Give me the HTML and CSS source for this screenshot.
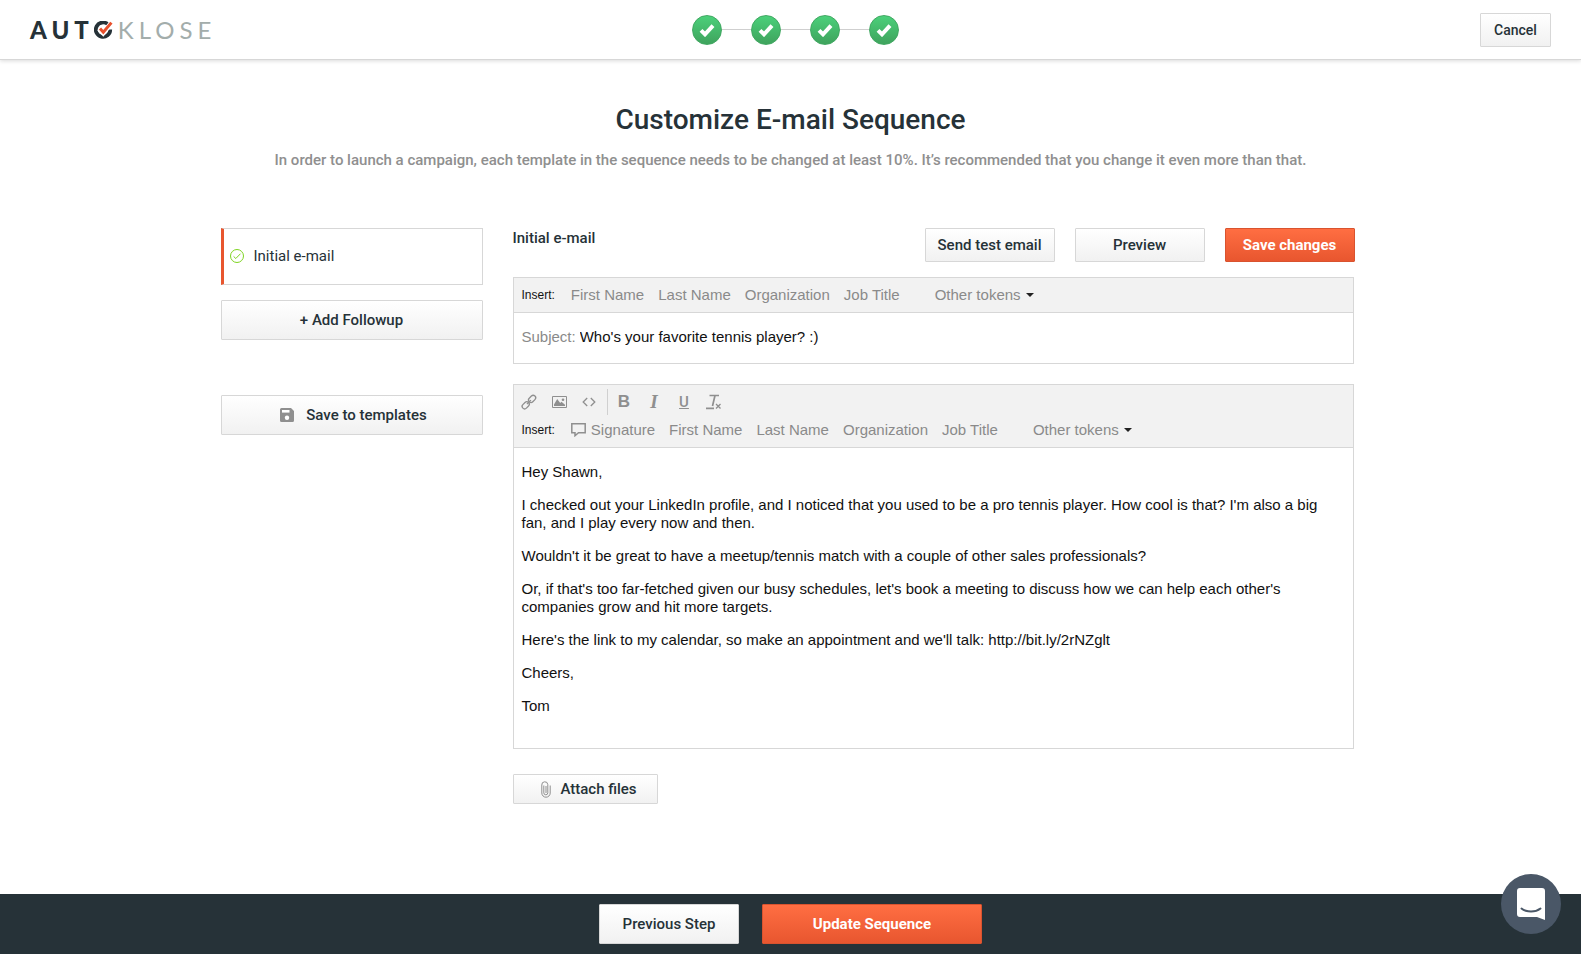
FILE: index.html
```
<!DOCTYPE html>
<html lang="en">
<head>
    <meta charset="UTF-8">
    <meta name="viewport" content="width=device-width, initial-scale=1.0">
    <title>Customize E-mail Sequence</title>
    <link rel="stylesheet" href="styles.css">
</head>
<body>
    <header class="header">
        <a href="#" class="logo" aria-label="Autoklose">
            <span class="logo-dark">AUT</span>
            <svg class="logo-mark" width="19" height="18" viewBox="0 0 19 18">
                <path d="M14 3.500A7.200 7.200 0 1 0 16.200 8.500" fill="none" stroke="#263238" stroke-width="3.800"/>
                <path d="M5.200 7.800l4 4.200 8-10" fill="none" stroke="#fff" stroke-width="5"/>
                <path d="M6 7.600l3.300 3.600L17.400 1.600" fill="none" stroke="#e8502d" stroke-width="3"/>
            </svg>
            <span class="logo-light">KLOSE</span>
        </a>
        <ol class="steps">
            <li><svg width="16" height="14" viewBox="0 0 16 14"><path d="M2 7.400l4 3.900L14 2.700" fill="none" stroke="#fff" stroke-width="4"/></svg></li>
            <li><svg width="16" height="14" viewBox="0 0 16 14"><path d="M2 7.400l4 3.900L14 2.700" fill="none" stroke="#fff" stroke-width="4"/></svg></li>
            <li><svg width="16" height="14" viewBox="0 0 16 14"><path d="M2 7.400l4 3.900L14 2.700" fill="none" stroke="#fff" stroke-width="4"/></svg></li>
            <li><svg width="16" height="14" viewBox="0 0 16 14"><path d="M2 7.400l4 3.900L14 2.700" fill="none" stroke="#fff" stroke-width="4"/></svg></li>
        </ol>
        <button type="button" class="btn btn-cancel">Cancel</button>
    </header>

    <main class="container">
        <h1>Customize E-mail Sequence</h1>
        <p class="intro">In order to launch a campaign, each template in the sequence needs to be changed at least 10%. It’s recommended that you change it even more than that.</p>

        <div class="columns">
            <aside class="sidebar">
                <a href="#" class="sequence-item">
                    <svg width="14" height="14" viewBox="0 0 14 14" fill="none" stroke="#7ed321">
                        <circle cx="7" cy="7" r="6.500"/>
                        <path d="M3.600 7.400l2.200 2.100 4.700-4.800"/>
                    </svg>
                    Initial e-mail
                </a>
                <button type="button" class="btn btn-side">+ Add Followup</button>
                <button type="button" class="btn btn-side btn-save">
                    <svg width="14" height="14" viewBox="0 0 14 14">
                        <path d="M1.500 0H11l3 3v9.500a1.500 1.500 0 0 1-1.500 1.500h-11A1.500 1.500 0 0 1 0 12.500v-11A1.500 1.500 0 0 1 1.500 0z" fill="#8f8f8f"/>
                        <path d="M2 2h7.500v2.600H2z" fill="#fff"/>
                        <circle cx="7" cy="9.800" r="2.200" fill="#fff"/>
                    </svg>
                    Save to templates
                </button>
            </aside>

            <section class="editor">
                <div class="editor-top">
                    <h2>Initial e-mail</h2>
                    <div class="actions">
                        <button type="button" class="btn">Send test email</button>
                        <button type="button" class="btn">Preview</button>
                        <button type="button" class="btn btn-primary">Save changes</button>
                    </div>
                </div>

                <div class="box">
                    <div class="box-head">
                        <div class="tokens">
                            <span class="insert">Insert:</span>
                            <button type="button">First Name</button>
                            <button type="button">Last Name</button>
                            <button type="button">Organization</button>
                            <button type="button">Job Title</button>
                            <button type="button" class="other">Other tokens <span class="caret"></span></button>
                        </div>
                    </div>
                    <div class="subject">
                        <label for="subject">Subject:</label>
                        <input type="text" id="subject" name="subject" value="Who's your favorite tennis player? :)">
                    </div>
                </div>

                <div class="box">
                    <div class="box-head">
                        <div class="toolbar">
                            <button type="button" aria-label="Link">
                                <svg width="16" height="16" viewBox="0 0 16 16" fill="none" stroke="#8f8f8f" stroke-width="1.300">
                                    <rect x="-4" y="-2.500" width="8" height="5" rx="2.500" transform="translate(11.100 4.900) rotate(-45)"/>
                                    <rect x="-4" y="-2.500" width="8" height="5" rx="2.500" transform="translate(4.700 11.300) rotate(-45)"/>
                                    <path d="M5.900 10.100l4-4"/>
                                </svg>
                            </button>
                            <button type="button" aria-label="Image">
                                <svg width="15" height="12" viewBox="0 0 15 12">
                                    <path d="M.5.5h14v11H.5z" fill="none" stroke="#8f8f8f"/>
                                    <path d="M2 10V8.500L5.200 3l3 4 1.300-1.200L13 8.800V10z" fill="#8f8f8f"/>
                                    <circle cx="11" cy="3.700" r="1.300" fill="#8f8f8f"/>
                                </svg>
                            </button>
                            <button type="button" aria-label="Source code">
                                <svg width="14" height="10" viewBox="0 0 14 10" fill="none" stroke="#8f8f8f" stroke-width="1.300">
                                    <path d="M5.200 1L1.200 5l4 4M8.800 1l4 4-4 4"/>
                                </svg>
                            </button>
                            <span class="divider"></span>
                            <button type="button" class="bold" aria-label="Bold">B</button>
                            <button type="button" class="italic" aria-label="Italic">I</button>
                            <button type="button" class="underline" aria-label="Underline">U</button>
                            <button type="button" class="clear" aria-label="Clear formatting">
                                <svg width="16" height="16" viewBox="0 0 16 16" fill="none" stroke="#8f8f8f" stroke-width="1.700">
                                    <path d="M3.500 1.500H13M9 1.500L6.500 12M0 14.400h8" />
                                    <path d="M10 10l4.500 4.500M14.500 10L10 14.500" stroke-width="1.300"/>
                                </svg>
                            </button>
                        </div>
                        <div class="tokens">
                            <span class="insert">Insert:</span>
                            <button type="button" class="signature">
                                <svg width="15" height="14" viewBox="0 0 15 14" fill="none" stroke="#8f8f8f" stroke-width="1.500">
                                    <path d="M.8.8h13.400v8.900H7.500L4 12.700v-3H.8z"/>
                                </svg>
                                Signature
                            </button>
                            <button type="button">First Name</button>
                            <button type="button">Last Name</button>
                            <button type="button">Organization</button>
                            <button type="button">Job Title</button>
                            <button type="button" class="other">Other tokens <span class="caret"></span></button>
                        </div>
                    </div>
                    <div class="message" contenteditable="true" role="textbox" aria-multiline="true" aria-label="Message" spellcheck="false">
                        <p>Hey Shawn,</p>
                        <p>I checked out your LinkedIn profile, and I noticed that you used to be a pro tennis player. How cool is that? I'm also a big fan, and I play every now and then.</p>
                        <p>Wouldn't it be great to have a meetup/tennis match with a couple of other sales professionals?</p>
                        <p>Or, if that's too far-fetched given our busy schedules, let's book a meeting to discuss how we can help each other's companies grow and hit more targets.</p>
                        <p>Here's the link to my calendar, so make an appointment and we'll talk: http://bit.ly/2rNZglt</p>
                        <p>Cheers,</p>
                        <p>Tom</p>
                    </div>
                </div>

                <button type="button" class="btn btn-attach">
                    <svg width="10" height="17" viewBox="0 0 10 17" fill="none" stroke="#8f8f8f">
                        <path d="M2.800 4.500v7.300a2 2 0 0 0 4 0V3.600a2.900 2.900 0 0 0-6 .400v8a4.200 4.200 0 0 0 8.400 0V4.500"/>
                        <path d="M5 5v7"/>
                    </svg>
                    Attach files
                </button>
            </section>
        </div>
    </main>

    <footer class="footer">
        <button type="button" class="btn btn-prev">Previous Step</button>
        <button type="button" class="btn btn-primary btn-update">Update Sequence</button>
    </footer>

    <button type="button" class="chat" aria-label="Open chat">
        <svg width="28" height="32" viewBox="0 0 28 32">
            <path d="M3 0h22a3 3 0 0 1 3 3v29l-8-3H3a3 3 0 0 1-3-3V3a3 3 0 0 1 3-3z" fill="#fff"/>
            <path d="M4.500 20.500c5 4 14 4 19 0" fill="none" stroke="#4a5767" stroke-width="2" stroke-linecap="round"/>
        </svg>
    </button>
</body>
</html>
```
FILE: styles.css
```
* {
    box-sizing: border-box;
}
body {
    margin: 0;
    min-height: 100vh;
    display: flex;
    flex-direction: column;
    font-family: Roboto, sans-serif;
    font-size: 15px;
    color: #263238;
    background: #fff;
}
button {
    font-family: inherit;
    cursor: pointer;
}
svg {
    display: block;
    flex: none;
}

/* header */
.header {
    display: grid;
    grid-template-columns: 1fr auto 1fr;
    align-items: center;
    height: 60px;
    padding: 0 30px;
    border-bottom: 1px solid #d7d7d7;
    box-shadow: 0 1px 4px rgba(0, 0, 0, 0.15);
}
.logo {
    display: flex;
    align-items: center;
    font-family: Lato, sans-serif;
    font-size: 24px;
    line-height: 30px;
    letter-spacing: 5px;
    text-decoration: none;
}
.logo-dark {
    font-weight: 900;
    color: #263238;
}
.logo-light {
    margin-left: 5px;
    font-weight: 400;
    color: #a3adab;
}
.steps {
    display: flex;
    gap: 29px;
    margin: 0;
    padding: 0 0 0 9px;
    list-style: none;
}
.steps li {
    position: relative;
    display: flex;
    align-items: center;
    justify-content: center;
    width: 30px;
    height: 30px;
    border: 1px solid #41a862;
    border-radius: 50%;
    background: linear-gradient(#4bd07a, #3fa35d);
}
.steps li + li::before {
    content: "";
    position: absolute;
    right: 29px;
    width: 29px;
    height: 1px;
    background: #cfcfcf;
}

/* buttons */
.btn {
    display: flex;
    align-items: center;
    justify-content: center;
    width: 130px;
    height: 34px;
    padding: 0;
    border: 1px solid #d7d7d7;
    border-radius: 1px;
    background: linear-gradient(#fff, #f1f1f1);
    font-size: 15px;
    font-weight: 500;
    color: #263238;
}
.btn-primary {
    border-color: #d9532f;
    background: linear-gradient(#ff6e42, #e8562f);
    font-weight: 700;
    color: #fff;
}
.btn-cancel {
    justify-self: end;
    width: 71px;
    font-size: 14px;
}

/* page */
.container {
    flex: 1;
    width: 100%;
    max-width: 1170px;
    margin: 0 auto;
    padding: 0 15px 80px;
}
h1 {
    margin: 44px 0 0;
    font-size: 28px;
    line-height: 32px;
    font-weight: 500;
    text-align: center;
}
.intro {
    margin: 14px 0 57px;
    font-size: 15px;
    line-height: 21px;
    font-weight: 500;
    text-align: center;
    color: #8f8f8f;
}
.columns {
    display: grid;
    grid-template-columns: 262px 1fr;
    gap: 30px;
    padding-right: 6px;
}
.sequence-item {
    display: flex;
    align-items: center;
    gap: 10px;
    height: 57px;
    padding: 0 6px 2px;
    border: 1px solid #d7d7d7;
    border-left: 3px solid #e8562f;
    color: #263238;
    text-decoration: none;
}
.btn-side {
    width: 100%;
    height: 40px;
    margin-top: 15px;
}
.btn-save {
    gap: 12px;
    margin-top: 55px;
    padding-left: 4px;
}

/* editor */
.editor-top {
    display: flex;
    justify-content: space-between;
    margin-bottom: 15px;
}
.editor-top h2 {
    margin: 0;
    font-size: 15px;
    line-height: 20px;
    font-weight: 500;
}
.actions {
    display: flex;
    gap: 20px;
}
.box {
    margin: 0 1px 20px 0;
    border: 1px solid #d7d7d7;
    font-family: "Liberation Sans", Arial, sans-serif;
    font-size: 15px;
    line-height: 18px;
    color: #111;
}
.box-head {
    padding: 0 8px;
    border-bottom: 1px solid #d7d7d7;
    background: #f2f2f2;
}
.tokens {
    display: flex;
    align-items: center;
    gap: 14px;
    height: 34px;
}
.insert {
    margin-right: 2px;
    font-size: 12px;
}
.tokens button {
    display: flex;
    align-items: center;
    gap: 5px;
    padding: 0;
    border: 0;
    background: none;
    font-size: 15px;
    line-height: 18px;
    color: #8a8a8a;
}
.tokens .other {
    margin-left: 21px;
}
.caret {
    border: 4px solid transparent;
    border-top-color: #222;
    border-bottom: 0;
}
.subject {
    display: flex;
    align-items: center;
    gap: 4px;
    height: 50px;
    padding: 0 8px 2px;
}
.subject label {
    color: #8a8a8a;
}
.subject input {
    flex: 1;
    padding: 0;
    border: 0;
    outline: 0;
    font: inherit;
    color: #111;
}
.toolbar {
    display: flex;
    align-items: center;
    gap: 15px;
    height: 28px;
    padding-top: 5px;
}
.toolbar button {
    display: flex;
    align-items: center;
    justify-content: center;
    width: 15px;
    height: 18px;
    padding: 0;
    border: 0;
    background: none;
    font-size: 17px;
    line-height: 18px;
    color: #8f8f8f;
}
.divider {
    width: 1px;
    height: 26px;
    margin: 0 -6px 0 -5px;
    background: #d0d0d0;
}
.toolbar .bold {
    font-weight: 700;
}
.toolbar .italic {
    font-family: "Liberation Serif", serif;
    font-size: 19px;
    font-weight: 700;
    font-style: italic;
}
.toolbar .underline {
    font-family: Roboto, sans-serif;
    font-size: 15px;
    font-weight: 500;
    text-decoration: underline;
}
.message {
    min-height: 300px;
    padding: 15px 8px;
    outline: 0;
}
.message p {
    margin: 0 0 15px;
}
.btn-attach {
    gap: 9px;
    width: 145px;
    height: 30px;
    margin-top: 25px;
    padding-left: 8px;
}

/* footer */
.footer {
    display: flex;
    align-items: center;
    justify-content: center;
    gap: 23px;
    height: 60px;
    background: #263238;
}
.btn-prev {
    width: 140px;
    height: 40px;
}
.btn-update {
    width: 220px;
    height: 40px;
}
.chat {
    position: fixed;
    right: 20px;
    bottom: 20px;
    display: flex;
    align-items: center;
    justify-content: center;
    width: 60px;
    height: 60px;
    padding: 0;
    border: 0;
    border-radius: 50%;
    background: #4a5767;
}
```
